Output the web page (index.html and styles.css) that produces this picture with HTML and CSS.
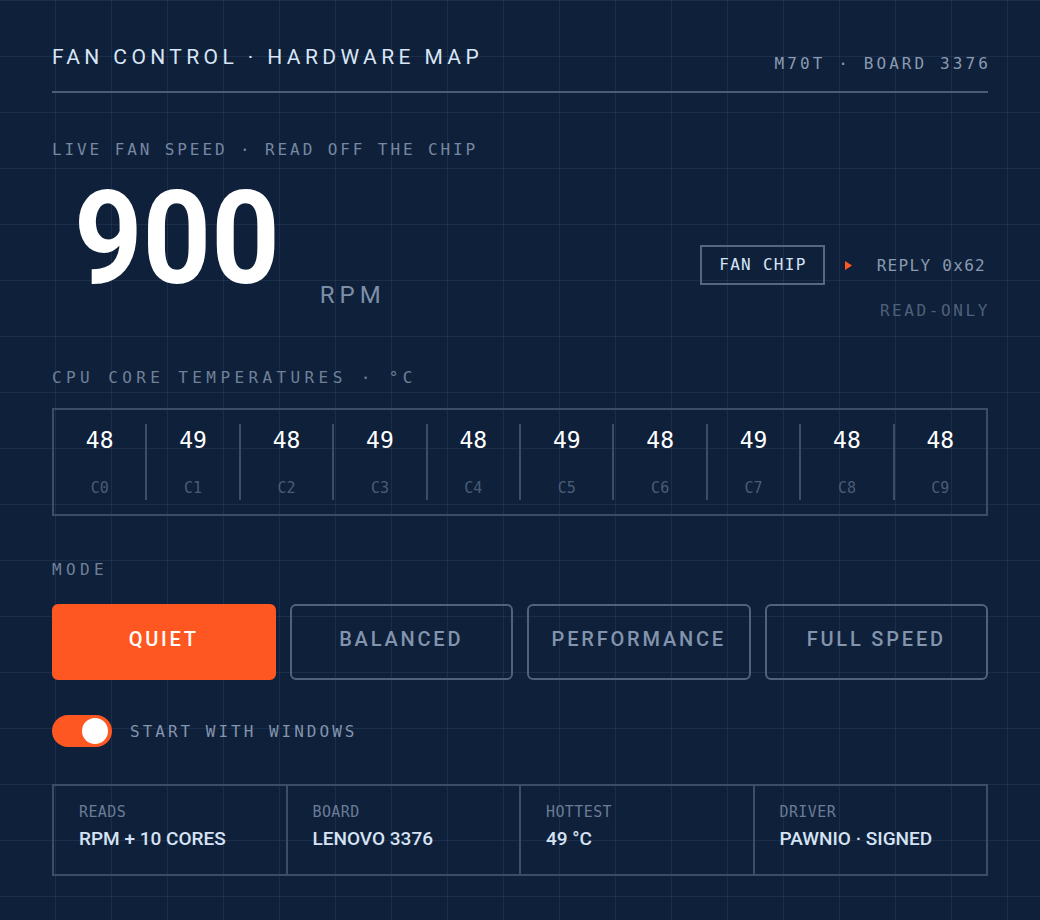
FILE: index.html
```html
<!DOCTYPE html>
<html lang="en">
<head>
    <meta charset="UTF-8">
    <meta name="viewport" content="width=device-width, initial-scale=1.0">
    <title>Fan Control · Hardware Map</title>
    <link rel="stylesheet" href="styles.css">
</head>
<body>
    <div class="page">
        <div class="top">
            <div class="title">FAN CONTROL · HARDWARE MAP</div>
            <div class="board-id">M70T · BOARD 3376</div>
        </div>

        <div class="live-label">LIVE FAN SPEED · READ OFF THE CHIP</div>
        <div class="hero">
            <div class="speed">
                <span class="rpm-value">900</span>
                <span class="rpm-unit">RPM</span>
            </div>
            <div class="chip">
                <div class="chip-row">
                    <div class="chip-box">FAN CHIP</div>
                    <svg class="chip-arrow" width="7" height="9" viewBox="0 0 7 9"><path d="M0 0 L7 4.5 L0 9 Z" fill="#ff5722"/></svg>
                    <div class="chip-reply">REPLY 0x62</div>
                </div>
                <div class="chip-mode">READ-ONLY</div>
            </div>
        </div>

        <div class="section-label temps-label">CPU CORE TEMPERATURES · °C</div>
        <div class="temps">
            <div class="core"><div class="core-temp">48</div><div class="core-name">C0</div></div>
            <div class="core"><div class="core-temp">49</div><div class="core-name">C1</div></div>
            <div class="core"><div class="core-temp">48</div><div class="core-name">C2</div></div>
            <div class="core"><div class="core-temp">49</div><div class="core-name">C3</div></div>
            <div class="core"><div class="core-temp">48</div><div class="core-name">C4</div></div>
            <div class="core"><div class="core-temp">49</div><div class="core-name">C5</div></div>
            <div class="core"><div class="core-temp">48</div><div class="core-name">C6</div></div>
            <div class="core"><div class="core-temp">49</div><div class="core-name">C7</div></div>
            <div class="core"><div class="core-temp">48</div><div class="core-name">C8</div></div>
            <div class="core"><div class="core-temp">48</div><div class="core-name">C9</div></div>
        </div>

        <div class="section-label mode-label">MODE</div>
        <div class="modes">
            <button class="mode active">QUIET</button>
            <button class="mode">BALANCED</button>
            <button class="mode">PERFORMANCE</button>
            <button class="mode">FULL SPEED</button>
        </div>

        <div class="startup">
            <div class="toggle on"><div class="knob"></div></div>
            <div class="startup-label">START WITH WINDOWS</div>
        </div>

        <div class="info">
            <div class="info-cell">
                <div class="info-label">READS</div>
                <div class="info-value">RPM + 10 CORES</div>
            </div>
            <div class="info-cell">
                <div class="info-label">BOARD</div>
                <div class="info-value">LENOVO 3376</div>
            </div>
            <div class="info-cell">
                <div class="info-label">HOTTEST</div>
                <div class="info-value">49 °C</div>
            </div>
            <div class="info-cell">
                <div class="info-label">DRIVER</div>
                <div class="info-value">PAWNIO · SIGNED</div>
            </div>
        </div>
    </div>
</body>
</html>
```

FILE: styles.css
```css
body {
    margin: 0;
    padding: 0;
    background-color: #0f203a;
    background-image:
        linear-gradient(to right, rgba(140, 170, 210, 0.1) 1px, transparent 1px),
        linear-gradient(to bottom, rgba(140, 170, 210, 0.1) 1px, transparent 1px);
    background-size: 56px 56px;
    background-position: 55px 56px;
    font-family: 'Roboto', 'Liberation Sans', sans-serif;
    color: #d8e6f7;
    min-height: 920px;
}
.page {
    padding: 0 52px;
}
.top {
    display: flex;
    justify-content: space-between;
    align-items: flex-end;
    padding: 44px 0 21px;
    border-bottom: 2px solid #4a5d78;
}
.title {
    font-size: 21px;
    line-height: 26px;
    font-weight: 400;
    letter-spacing: 4.4px;
    color: #d8e6f7;
}
.board-id {
    font-family: 'DejaVu Sans Mono', monospace;
    font-size: 16px;
    line-height: 20px;
    letter-spacing: 3.1px;
    color: #8a9ab0;
    margin-bottom: -4px;
    margin-right: -3px;
}
.live-label {
    margin-top: 47px;
    font-family: 'DejaVu Sans Mono', monospace;
    font-size: 16px;
    line-height: 20px;
    letter-spacing: 2.9px;
    color: #7688a2;
}
.hero {
    display: flex;
    justify-content: space-between;
    align-items: flex-start;
}
.speed {
    display: flex;
    align-items: flex-end;
    margin-top: 14px;
}
.rpm-value {
    font-size: 130px;
    line-height: 130px;
    font-weight: 700;
    color: #ffffff;
    margin-left: 22px;
    transform: scaleX(0.92);
    transform-origin: left center;
}
.rpm-unit {
    font-size: 24px;
    line-height: 24px;
    letter-spacing: 5px;
    color: #7d8fa8;
    margin-left: 22px;
    margin-bottom: -3px;
}
.chip {
    margin-top: 85px;
    display: flex;
    flex-direction: column;
    align-items: flex-end;
}
.chip-row {
    display: flex;
    align-items: center;
}
.chip-box {
    height: 36px;
    line-height: 36px;
    padding: 0 16px 0 17px;
    border: 2px solid #56687f;
    font-family: 'DejaVu Sans Mono', monospace;
    font-size: 16px;
    letter-spacing: 1.3px;
    color: #d6e4f5;
}
.chip-arrow {
    margin-left: 20px;
    margin-right: 25px;
}
.chip-reply {
    font-family: 'DejaVu Sans Mono', monospace;
    font-size: 16px;
    letter-spacing: 1.3px;
    color: #8a9ab0;
    margin-right: 2px;
}
.chip-mode {
    margin-top: 16px;
    font-family: 'DejaVu Sans Mono', monospace;
    font-size: 16px;
    line-height: 20px;
    letter-spacing: 2.6px;
    color: #4f6179;
    margin-right: -2px;
}
.section-label {
    font-family: 'DejaVu Sans Mono', monospace;
    font-size: 16px;
    line-height: 20px;
    letter-spacing: 4.4px;
    color: #6f8199;
}
.temps-label {
    margin-top: 47px;
}
.temps {
    margin-top: 20px;
    display: flex;
    border: 2px solid #3b4e68;
    padding: 14px 0;
}
.core {
    flex: 1;
    height: 76px;
    display: flex;
    flex-direction: column;
    align-items: center;
}
.core + .core {
    border-left: 2px solid #3b4e68;
}
.core-temp {
    font-family: 'DejaVu Sans Mono', monospace;
    font-size: 23px;
    line-height: 32px;
    color: #ffffff;
}
.core-name {
    margin-top: 22px;
    font-family: 'DejaVu Sans Mono', monospace;
    font-size: 15px;
    line-height: 20px;
    color: #4a5c76;
}
.mode-label {
    margin-top: 44px;
}
.modes {
    margin-top: 24px;
    display: flex;
    gap: 14px;
}
.mode {
    flex: 1;
    height: 76px;
    padding: 0 0 6px;
    border: 2px solid #50637d;
    border-radius: 6px;
    background: transparent;
    font-family: 'Roboto', 'Liberation Sans', sans-serif;
    font-size: 20px;
    font-weight: 500;
    letter-spacing: 2.8px;
    color: #8394ad;
    cursor: pointer;
}
.mode.active {
    background: #ff5722;
    border-color: #ff5722;
    color: #ffffff;
}
.startup {
    margin-top: 35px;
    display: flex;
    align-items: center;
}
.toggle {
    width: 60px;
    height: 32px;
    border-radius: 16px;
    background: #ff5722;
    display: flex;
    align-items: center;
    justify-content: flex-end;
    padding: 0 4px;
    box-sizing: border-box;
}
.knob {
    width: 26px;
    height: 26px;
    border-radius: 50%;
    background: #ffffff;
}
.startup-label {
    margin-left: 18px;
    font-family: 'DejaVu Sans Mono', monospace;
    font-size: 16px;
    letter-spacing: 3px;
    color: #8394ad;
}
.info {
    margin-top: 37px;
    display: flex;
    border: 2px solid #3b4e68;
}
.info-cell {
    flex: 1;
    padding: 17px 25px 23px;
}
.info-cell + .info-cell {
    border-left: 2px solid #3b4e68;
}
.info-label {
    font-family: 'DejaVu Sans Mono', monospace;
    font-size: 15px;
    line-height: 18px;
    letter-spacing: 0.4px;
    color: #6a7c96;
}
.info-value {
    margin-top: 6px;
    font-size: 19px;
    line-height: 24px;
    font-weight: 500;
    color: #d6e3f5;
}
```
